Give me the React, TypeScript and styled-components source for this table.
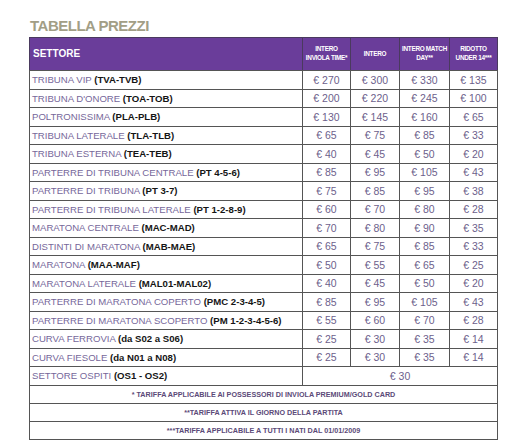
import React from "react";
import styled, { createGlobalStyle } from "styled-components";

const GlobalStyle = createGlobalStyle`
  html, body {
    margin: 0;
    padding: 0;
    background: #fff;
  }
  body {
    font-family: "Liberation Sans", Arial, sans-serif;
  }
`;

const Page = styled.div`
  display: flex;
  flex-direction: column;
  padding: 18px 0 0 29px;
  width: 468px;
`;

const Title = styled.h2`
  margin: 0 0 3px 1px;
  font-size: 15px;
  font-weight: bold;
  letter-spacing: -0.5px;
  color: #a29e86;
  line-height: 16px;
`;

const Table = styled.table`
  width: 468px;
  border-collapse: collapse;
  table-layout: fixed;
  border: 1px solid #555;
`;

const HeadCell = styled.th<{ $main?: boolean }>`
  height: 32px;
  padding: 0 ${({ $main }) => ($main ? "3px" : "0")};
  background: #6a3d9a;
  color: #fff;
  font-weight: bold;
  font-size: ${({ $main }) => ($main ? "10px" : "6.4px")};
  letter-spacing: ${({ $main }) => ($main ? "0" : "-0.3px")};
  white-space: nowrap;
  line-height: 1.4;
  text-align: ${({ $main }) => ($main ? "left" : "center")};
  border: 1px solid #4a3a5e;
  border-bottom: 1px solid #555;
`;

const Row = styled.tr`
  height: 18.5px;
`;

const NameCell = styled.td`
  padding: 0 2px;
  font-size: 9.6px;
  color: #76679a;
  white-space: nowrap;
  border-top: 1px solid #555;
  border-bottom: 1px solid #555;
  border-right: 1px solid #555;
`;

const Code = styled.b`
  color: #151515;
`;

const PriceCell = styled.td`
  padding: 0;
  text-align: center;
  font-size: 10.5px;
  color: #6d5f8c;
  border: 1px solid #555;
`;

const NoteCell = styled.td`
  height: 17px;
  padding: 0;
  text-align: center;
  font-size: 7.2px;
  font-weight: bold;
  color: #5b4a78;
  border: 1px solid #555;
`;

type Sector = { name: string; code: string; prices: string[] };

const sectors: Sector[] = [
  { name: "TRIBUNA VIP", code: "(TVA-TVB)", prices: ["270", "300", "330", "135"] },
  { name: "TRIBUNA D'ONORE", code: "(TOA-TOB)", prices: ["200", "220", "245", "100"] },
  { name: "POLTRONISSIMA", code: "(PLA-PLB)", prices: ["130", "145", "160", "65"] },
  { name: "TRIBUNA LATERALE", code: "(TLA-TLB)", prices: ["65", "75", "85", "33"] },
  { name: "TRIBUNA ESTERNA", code: "(TEA-TEB)", prices: ["40", "45", "50", "20"] },
  { name: "PARTERRE DI TRIBUNA CENTRALE", code: "(PT 4-5-6)", prices: ["85", "95", "105", "43"] },
  { name: "PARTERRE DI TRIBUNA", code: "(PT 3-7)", prices: ["75", "85", "95", "38"] },
  { name: "PARTERRE DI TRIBUNA LATERALE", code: "(PT 1-2-8-9)", prices: ["60", "70", "80", "28"] },
  { name: "MARATONA CENTRALE", code: "(MAC-MAD)", prices: ["70", "80", "90", "35"] },
  { name: "DISTINTI DI MARATONA", code: "(MAB-MAE)", prices: ["65", "75", "85", "33"] },
  { name: "MARATONA", code: "(MAA-MAF)", prices: ["50", "55", "65", "25"] },
  { name: "MARATONA LATERALE", code: "(MAL01-MAL02)", prices: ["40", "45", "50", "20"] },
  { name: "PARTERRE DI MARATONA COPERTO", code: "(PMC 2-3-4-5)", prices: ["85", "95", "105", "43"] },
  { name: "PARTERRE DI MARATONA SCOPERTO", code: "(PM 1-2-3-4-5-6)", prices: ["55", "60", "70", "28"] },
  { name: "CURVA FERROVIA", code: "(da S02 a S06)", prices: ["25", "30", "35", "14"] },
  { name: "CURVA FIESOLE", code: "(da N01 a N08)", prices: ["25", "30", "35", "14"] },
];

const notes = [
  "* TARIFFA APPLICABILE AI POSSESSORI DI INVIOLA PREMIUM/GOLD CARD",
  "**TARIFFA ATTIVA IL GIORNO DELLA PARTITA",
  "***TARIFFA APPLICABILE A TUTTI I NATI DAL 01/01/2009",
];

export default function App() {
  return (
    <>
      <GlobalStyle />
      <Page>
        <Title>TABELLA PREZZI</Title>
        <Table>
          <colgroup>
            <col style={{ width: 273 }} />
            <col style={{ width: 48 }} />
            <col style={{ width: 49 }} />
            <col style={{ width: 50 }} />
            <col style={{ width: 48 }} />
          </colgroup>
          <thead>
            <tr>
              <HeadCell $main>SETTORE</HeadCell>
              <HeadCell>
                INTERO
                <br />
                INVIOLA TIME*
              </HeadCell>
              <HeadCell>INTERO</HeadCell>
              <HeadCell>
                INTERO MATCH
                <br />
                DAY**
              </HeadCell>
              <HeadCell>
                RIDOTTO
                <br />
                UNDER 14***
              </HeadCell>
            </tr>
          </thead>
          <tbody>
            {sectors.map((s) => (
              <Row key={s.name}>
                <NameCell>
                  {s.name} <Code>{s.code}</Code>
                </NameCell>
                {s.prices.map((p, i) => (
                  <PriceCell key={i}>€ {p}</PriceCell>
                ))}
              </Row>
            ))}
            <Row>
              <NameCell>
                SETTORE OSPITI <Code>(OS1 - OS2)</Code>
              </NameCell>
              <PriceCell colSpan={4}>€ 30</PriceCell>
            </Row>
            {notes.map((n) => (
              <tr key={n}>
                <NoteCell colSpan={5}>{n}</NoteCell>
              </tr>
            ))}
          </tbody>
        </Table>
      </Page>
    </>
  );
}
